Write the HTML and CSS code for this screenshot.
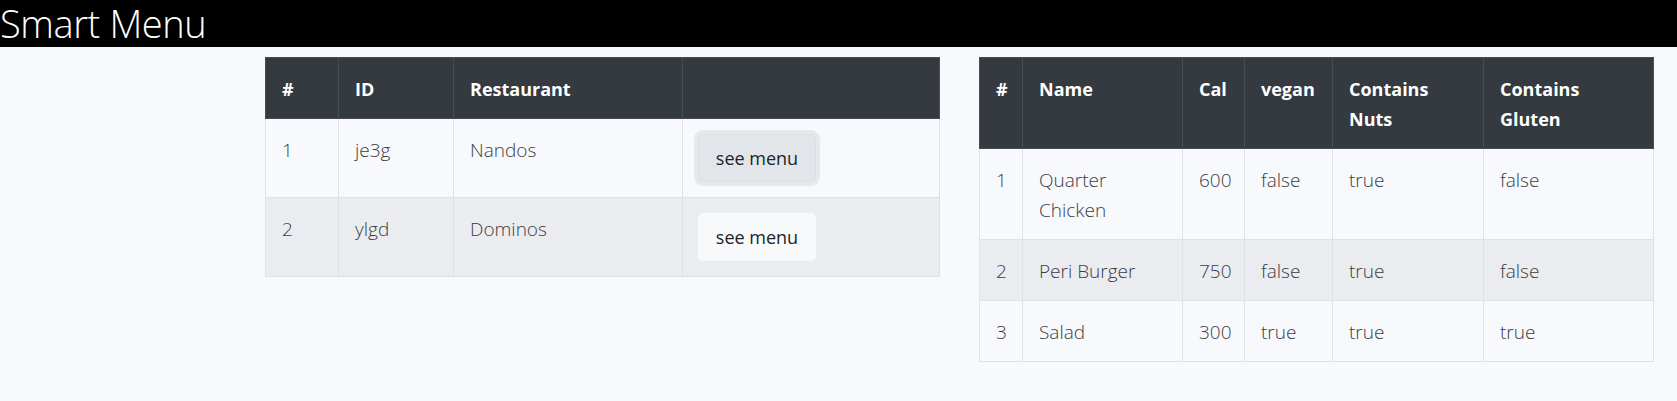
FILE: index.html
```html
<!DOCTYPE html>
<html>
<head>
<meta charset="utf-8">
<link rel="stylesheet" href="styles.css">
</head>
<body>
<header class="topbar"><h1 class="title">Smart Menu</h1></header>
<main class="content">
  <table class="tbl tbl-rest">
    <thead>
      <tr><th class="c-num">#</th><th class="c-id">ID</th><th class="c-rest">Restaurant</th><th class="c-act"></th></tr>
    </thead>
    <tbody>
      <tr><td>1</td><td>je3g</td><td>Nandos</td><td><button class="btn btn-focus">see menu</button></td></tr>
      <tr class="striped"><td>2</td><td>ylgd</td><td>Dominos</td><td><button class="btn">see menu</button></td></tr>
    </tbody>
  </table>
  <table class="tbl tbl-menu">
    <thead>
      <tr><th class="m-num">#</th><th class="m-name">Name</th><th class="m-cal">Cal</th><th class="m-vegan">vegan</th><th class="m-nuts">Contains Nuts</th><th class="m-gluten">Contains Gluten</th></tr>
    </thead>
    <tbody>
      <tr><td>1</td><td>Quarter Chicken</td><td>600</td><td>false</td><td>true</td><td>false</td></tr>
      <tr class="striped"><td>2</td><td>Peri Burger</td><td>750</td><td>false</td><td>true</td><td>false</td></tr>
      <tr><td>3</td><td>Salad</td><td>300</td><td>true</td><td>true</td><td>true</td></tr>
    </tbody>
  </table>
</main>
</body>
</html>
```
FILE: styles.css
```css
* { box-sizing: border-box; }
html, body { margin: 0; padding: 0; }
body {
  background: #f8f9fd;
  font-family: "Open Sans", "Noto Sans", sans-serif;
  color: #212529;
}
.topbar {
  background: #000;
  height: 47px;
}
.title {
  margin: 0;
  color: #fff;
  font-weight: 300;
  font-size: 38px;
  line-height: 47px;
  letter-spacing: -0.4px;
}
.content {
  display: flex;
  gap: 39px;
  padding: 10px 0 0 265px;
  align-items: flex-start;
}
.tbl {
  width: 674px;
  table-layout: fixed;
  border-collapse: collapse;
  border: 1px solid #dee2e6;
  font-size: 19px;
}
.tbl th, .tbl td {
  padding: 16px 15px 14px 16px;
  line-height: 30px;
  text-align: left;
  vertical-align: top;
}
.tbl th {
  background: #343a40;
  color: #fff;
  font-weight: 700;
  border: 1px solid #454d55;
  font-size: 18px;
}
.tbl td {
  border: 1px solid #dee2e6;
  font-weight: 300;
  color: #3a3d42;
}
.tbl .striped td { background: #ebecf0; }
.c-num { width: 73px; }
.c-id { width: 115px; }
.c-rest { width: 229px; }
.c-act { width: 257px; }
.m-num { width: 43px; }
.m-name { width: 160px; }
.m-cal { width: 62px; }
.m-vegan { width: 88px; }
.m-nuts { width: 151px; }
.m-gluten { width: 170px; }
.btn {
  display: block;
  width: 118px;
  height: 48px;
  margin: -1px 0 1px -1px;
  border: 1px solid #f8f9fa;
  border-radius: 5px;
  background: #f8f9fa;
  color: #212529;
  font-family: "Open Sans", "Noto Sans", sans-serif;
  font-size: 18px;
  font-weight: 400;
  padding: 0;
}
.btn-focus {
  background: #e2e6ea;
  border-color: #dae0e5;
  box-shadow: 0 0 0 4px #e7e8ec;
}
```
